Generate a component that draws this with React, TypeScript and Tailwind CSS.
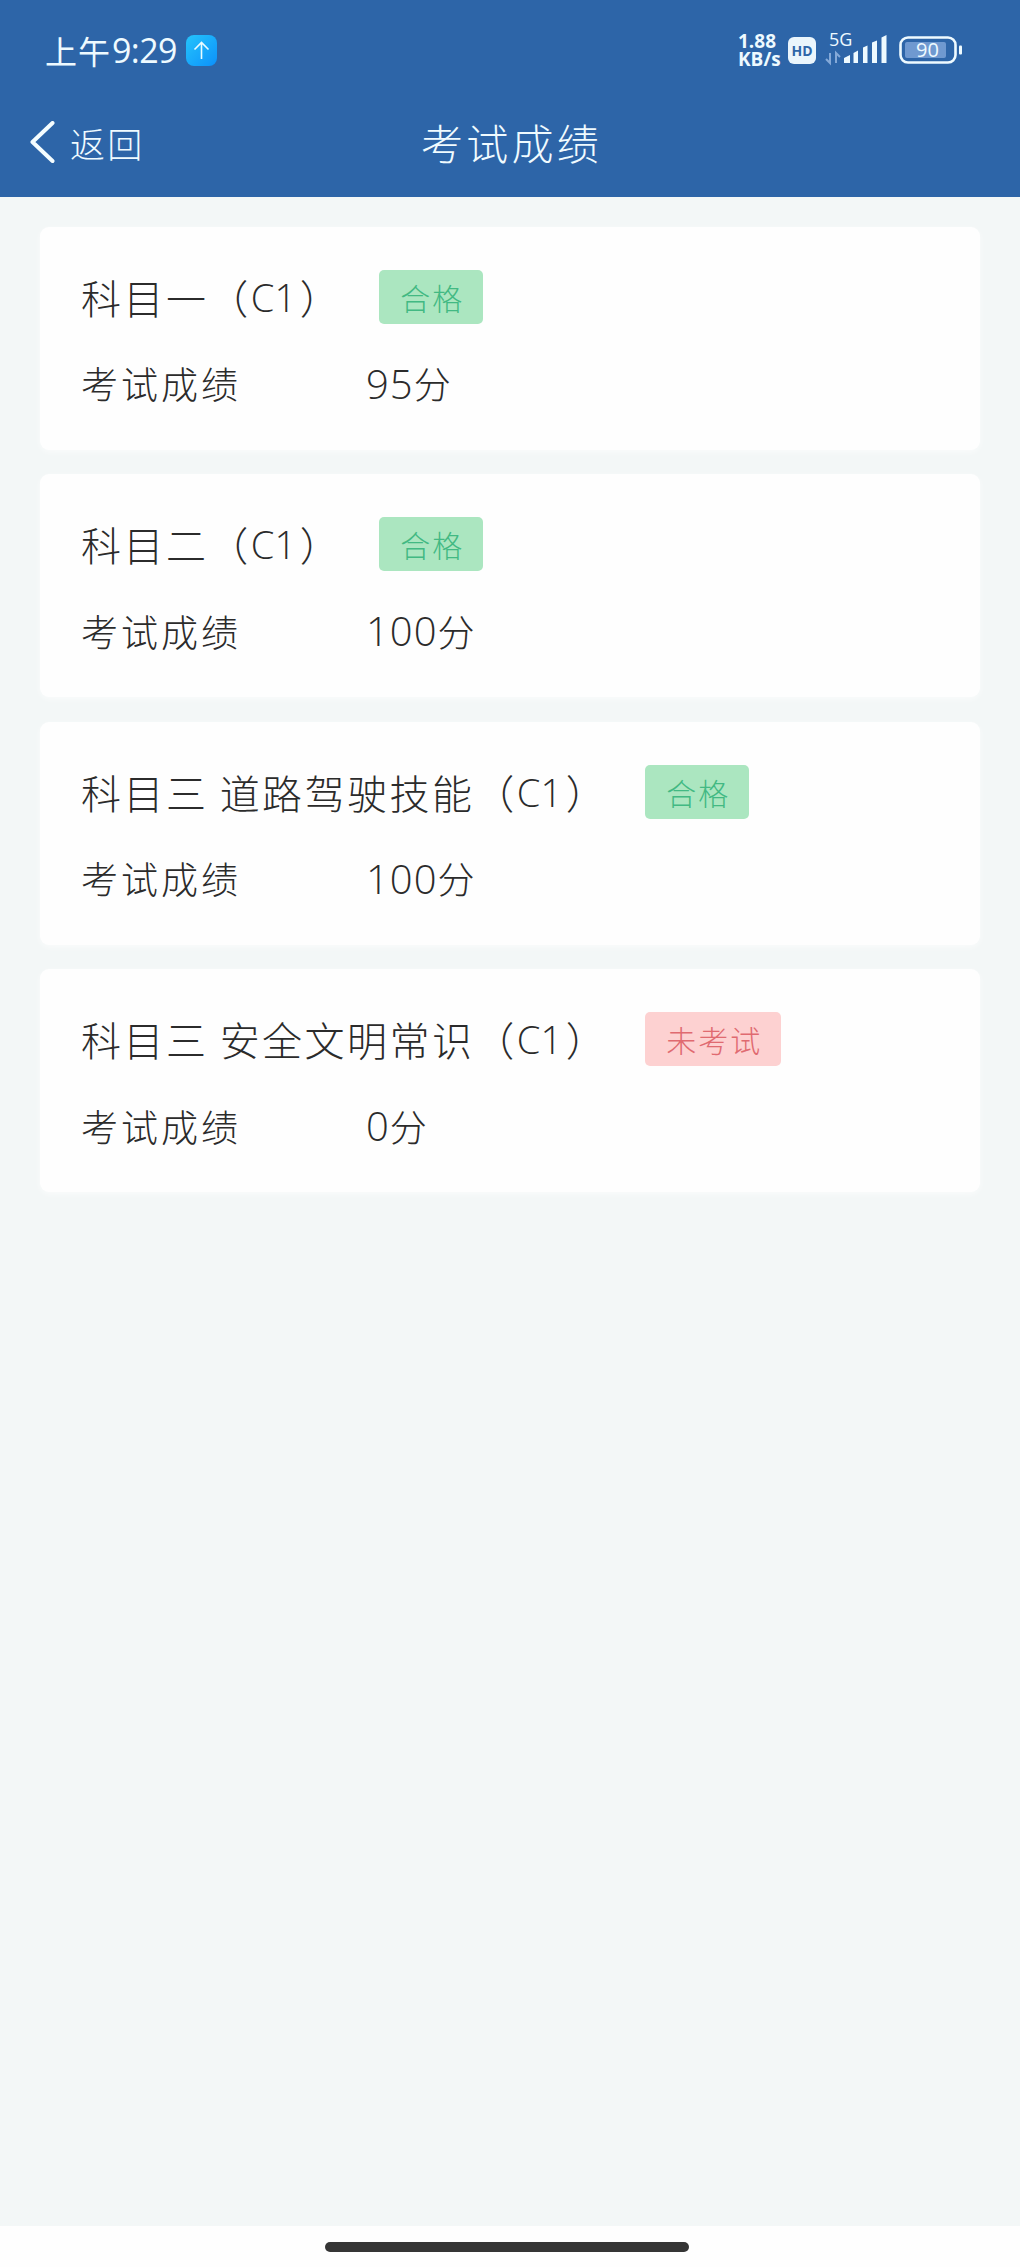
const CJK = "font-['Noto_Sans_CJK_SC',sans-serif]";
const LATIN = "font-['Open_Sans','Noto_Sans_CJK_SC',sans-serif]";

type Result = { subject: string; score: string; passed: boolean };

const results: Result[] = [
  { subject: '科目一', score: '95', passed: true },
  { subject: '科目二', score: '100', passed: true },
  { subject: '科目三 道路驾驶技能', score: '100', passed: true },
  { subject: '科目三 安全文明常识', score: '0', passed: false },
];

function StatusBar() {
  return (
    <div className="flex h-[100px] items-center pl-[45px] pr-[57px] text-[#eefaff]">
      <div className="flex items-center whitespace-nowrap leading-none">
        <span className="text-[32px] tracking-[1px]">上午</span>
        <span className="ml-[1px] font-['Open_Sans',sans-serif] text-[34px] tracking-[-0.6px]">9:29</span>
      </div>
      <svg className="ml-[9px] h-[31px] w-[31px]" viewBox="0 0 31 31" fill="none">
        <defs>
          <linearGradient id="app" x1="0" y1="0" x2="1" y2="1">
            <stop offset="0" stopColor="#25c4fb" />
            <stop offset="1" stopColor="#0c91fb" />
          </linearGradient>
        </defs>
        <rect width="31" height="31" rx="8" fill="url(#app)" />
        <path d="M15.5 24V8M8.5 14.5l7-7 7 7" stroke="#e8fbff" strokeWidth="1.6" />
      </svg>
      <div className="ml-auto flex items-center">
        <div className="flex w-[44px] flex-col font-['Open_Sans',sans-serif] text-[19px] font-bold leading-[18px]">
          <span>1.88</span>
          <span>KB/s</span>
        </div>
        <div className="ml-[6px] flex h-[27px] w-[28px] items-center justify-center rounded-[6px] bg-[#eaf5fc] font-['Open_Sans',sans-serif] text-[14px] font-bold text-[#2e65a8]">
          HD
        </div>
        <svg className="ml-[9px] h-[36px] w-[64px]" viewBox="0 0 64 36">
          <text x="4" y="14" fontFamily="Open Sans" fontSize="18" fill="#eefaff">5G</text>
          <path d="M5 21v10l-4-4M11 31V21l4 4" fill="none" stroke="#84a9d8" strokeWidth="2" />
          <g fill="#eefaff">
            <path d="M19 31v-5l6-3v8z" />
            <path d="M28.500 31V21l4.500-2.500V31z" />
            <path d="M38 31V15.500l4.500-2V31z" />
            <path d="M47 31V10.500l5-2V31z" />
            <path d="M56.500 31V5.500l5-2.500V31z" />
          </g>
        </svg>
        <svg className="ml-[10px] h-[30px] w-[64px]" viewBox="0 0 64 30">
          <rect x="1.500" y="2.500" width="55" height="25" rx="7.500" fill="none" stroke="#eefaff" strokeWidth="2.600" />
          <rect x="6" y="7" width="41" height="16" rx="2" fill="#6f99d0" />
          <rect x="60" y="10.500" width="3" height="9" rx="1" fill="#eefaff" />
          <text x="28.500" y="21.800" textAnchor="middle" fontFamily="Open Sans" fontSize="20" fill="#eefaff">90</text>
        </svg>
      </div>
    </div>
  );
}

function NavBar() {
  return (
    <div className="grid h-[97px] grid-cols-3 items-start pt-[14px] font-light text-[#f0fbff]">
      <div className="flex h-[56px] items-center pl-[30px]">
        <svg className="h-[42px] w-[25px]" viewBox="0 0 25 42" fill="none">
          <path d="M22.500 2L2.500 21l20 19" stroke="#f4fdff" strokeWidth="4" strokeLinecap="round" strokeLinejoin="round" />
        </svg>
        <span className="ml-[15px] text-[35px] leading-none tracking-[2.300px]">返回</span>
      </div>
      <div className="flex h-[56px] items-center justify-center whitespace-nowrap pl-[3px] text-[42px] leading-none tracking-[3.200px]">
        考试成绩
      </div>
    </div>
  );
}

function Card({ subject, score, passed }: Result) {
  return (
    <section className="h-[223px] rounded-[9px] bg-[#fefefe] px-[41px] pt-[43px] font-light text-[#2b2b2b] shadow-[0_2px_6px_rgba(255,255,255,0.6)]">
      <div className="flex h-[54px] items-center whitespace-nowrap">
        <h2 className="flex items-center text-[40px] leading-none tracking-[2.450px]">
          <span className="whitespace-pre">{subject}（</span>
          <span className={`w-[49px] text-[38px] tracking-[0px] ${LATIN}`}>C1</span>
          <span>）</span>
        </h2>
        <span
          className={`ml-[37px] flex h-[54px] items-center rounded-[5px] pl-[21px] pr-[19px] text-[30px] leading-none tracking-[2px] ${
            passed ? 'bg-[#abe6c0] text-[#42b983]' : 'bg-[#fdd1d1] text-[#e06a70]'
          }`}
        >
          {passed ? '合格' : '未考试'}
        </span>
      </div>
      <div className="mt-[33px] flex h-[54px] items-center whitespace-nowrap leading-none">
        <span className="w-[285px] text-[37px] tracking-[3px]">考试成绩</span>
        <span className={`text-[40px] tracking-[1px] ${LATIN}`}>{score}</span>
        <span className="text-[37px]">分</span>
      </div>
    </section>
  );
}

export default function App() {
  return (
    <div className={`flex h-[2267px] w-[1020px] flex-col overflow-hidden bg-[#f3f7f7] ${CJK}`}>
      <header className="h-[197px] shrink-0 bg-[#2d65a8]">
        <StatusBar />
        <NavBar />
      </header>
      <main className="flex flex-1 flex-col gap-[24.600px] px-[40px] pt-[29.500px]">
        {results.map((r) => (
          <Card key={r.subject} {...r} />
        ))}
      </main>
      <footer className="flex h-[41px] shrink-0 justify-center bg-[#fefefe] pt-[16px]">
        <div className="ml-[-6px] h-[10px] w-[364px] rounded-full bg-[#353535] translate-x-[0px]" />
      </footer>
    </div>
  );
}
